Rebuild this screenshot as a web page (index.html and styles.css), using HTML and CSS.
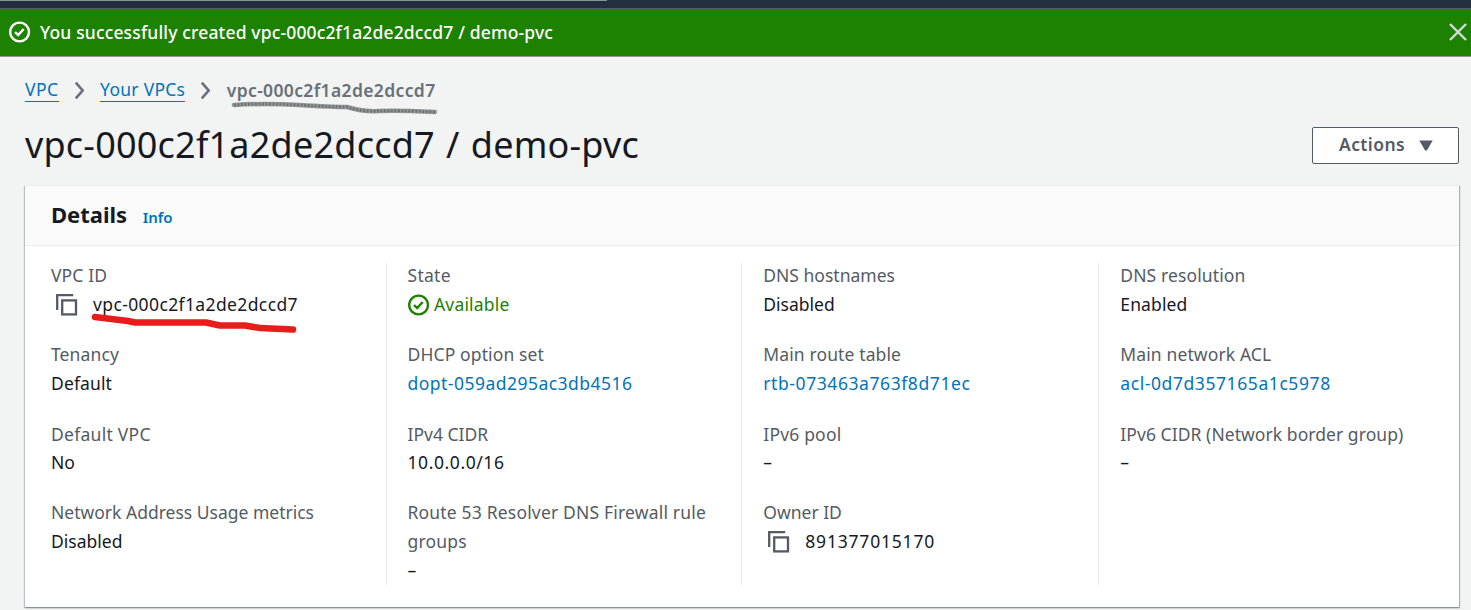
FILE: index.html
```html
<!DOCTYPE html>
<html lang="en">
<head>
<meta charset="utf-8">
<title>VPC details</title>
<link rel="stylesheet" href="styles.css">
</head>
<body>
<svg class="defs" aria-hidden="true">
  <symbol id="check" viewBox="0 0 22 22"><g fill="none" stroke="currentColor" stroke-width="2.4"><circle cx="10.6" cy="11" r="9.4"/><path d="M6 11.2l3.2 2.8 5.5-6"/></g></symbol>
  <symbol id="copy" viewBox="0 0 22 22"><g fill="none" stroke="currentColor" stroke-width="2.3"><path d="M1.2 16V1.2h16"/><rect x="6.2" y="6.4" width="13.8" height="14"/></g></symbol>
  <symbol id="chevron" viewBox="0 0 10 18"><path d="M1.5 1.5L8 9l-6.5 7.5" fill="none" stroke="currentColor" stroke-width="2.5"/></symbol>
</svg>
<div class="topbar"><div class="progress"></div></div>
<div class="flash">
  <svg class="icon"><use href="#check"/></svg>
  <span class="flash-text">You successfully created vpc-000c2f1a2de2dccd7 / demo-pvc</span>
  <svg class="close" viewBox="0 0 18 18"><path d="M1 1l16 16M17 1L1 17" fill="none" stroke="currentColor" stroke-width="2.4"/></svg>
</div>
<main class="page">
  <nav class="crumbs">
    <a class="crumb ls5">VPC</a>
    <svg class="chevron"><use href="#chevron"/></svg>
    <a class="crumb ls3">Your VPCs</a>
    <svg class="chevron"><use href="#chevron"/></svg>
    <span class="current">vpc-000c2f1a2de2dccd7
      <svg class="pencil" viewBox="0 0 208 14"><path d="M3 4Q35 2 68 4T116 6Q132 11 148 10T204 11"/><path class="grain" d="M3 4Q35 2 68 4T116 6Q132 11 148 10T204 11"/></svg>
    </span>
  </nav>
  <header class="heading">
    <h1>vpc-000c2f1a2de2dccd7 / demo-pvc</h1>
    <button class="actions"><span>Actions</span><svg viewBox="0 0 14 11"><path d="M.3.5h13.4L8.2 10q-1.2 1.2-2.4 0z" fill="currentColor"/></svg></button>
  </header>
  <section class="card">
    <div class="card-head"><h2>Details</h2><a class="info">Info</a></div>
    <div class="grid">
      <div class="col">
        <div class="field"><div class="label">VPC ID</div><div class="value copyrow"><svg class="icon copy"><use href="#copy"/></svg><span class="ls4 marked">vpc-000c2f1a2de2dccd7<svg class="marker" viewBox="0 0 208 20"><path d="M4 4l33 4 7 1.5h71l14 3h25l15 2.5 33 1.5"/></svg></span></div></div>
        <div class="field"><div class="label">Tenancy</div><div class="value ls1">Default</div></div>
        <div class="field"><div class="label ls3">Default VPC</div><div class="value up">No</div></div>
        <div class="field"><div class="label ls0">Network Address Usage metrics</div><div class="value ls0">Disabled</div></div>
      </div>
      <div class="col">
        <div class="field"><div class="label ls3">State</div><div class="value ok"><svg class="icon"><use href="#check"/></svg><span class="ls2">Available</span></div></div>
        <div class="field"><div class="label">DHCP option set</div><div class="value link ls5">dopt-059ad295ac3db4516</div></div>
        <div class="field"><div class="label ls0">IPv4 CIDR</div><div class="value up ls6">10.0.0.0/16</div></div>
        <div class="field"><div class="label ls2">Route 53 Resolver DNS Firewall rule<br>groups</div><div class="value">–</div></div>
      </div>
      <div class="col wide">
        <div class="field"><div class="label ls0">DNS hostnames</div><div class="value ls0">Disabled</div></div>
        <div class="field"><div class="label">Main route table</div><div class="value link ls6">rtb-073463a763f8d71ec</div></div>
        <div class="field"><div class="label ls2">IPv6 pool</div><div class="value up">–</div></div>
        <div class="field"><div class="label ls0">Owner ID</div><div class="value copyrow"><svg class="icon copy"><use href="#copy"/></svg><span class="ls8">891377015170</span></div></div>
      </div>
      <div class="col wide">
        <div class="field"><div class="label">DNS resolution</div><div class="value ls1">Enabled</div></div>
        <div class="field"><div class="label">Main network ACL</div><div class="value link ls6">acl-0d7d357165a1c5978</div></div>
        <div class="field"><div class="label lshalf">IPv6 CIDR (Network border group)</div><div class="value up">–</div></div>
      </div>
    </div>
  </section>
</main>
</body>
</html>
```
FILE: styles.css
```css
* { box-sizing: border-box; }
body { margin: 0; height: 610px; overflow: hidden; background: #f2f3f3; color: #16191f; font-family: "Noto Sans", "Open Sans", sans-serif; font-size: 17.5px; white-space: nowrap; }
.defs { position: absolute; width: 0; height: 0; }
.topbar { height: 9px; background: #232f3e; border-bottom: 1px solid #545b64; }
.progress { width: 607px; height: 1px; background: #879596; }
.flash { height: 48px; display: flex; align-items: center; padding: 0 4px 2px 9px; background: #1d8102; color: #fff; border-bottom: 1px solid #8c9895; }
.icon { width: 22px; height: 22px; flex: none; display: block; }
.flash-text { margin-left: 9px; font-size: 17.5px; font-weight: 500; letter-spacing: .15px; }
.close { width: 18px; height: 18px; margin-left: auto; color: #d5dbdb; }
.page { padding: 18px 12px 0 25px; }
.crumbs { height: 30px; display: flex; align-items: center; font-size: 17.5px; }
.crumb { color: #0073bb; border-bottom: 1px solid #0073bb; line-height: 23px; }
.chevron { width: 11px; height: 19px; margin: 0 15.5px 0 15px; color: #687078; }
.current { position: relative; color: #687078; font-weight: 600; letter-spacing: .36px; }
.pencil { position: absolute; left: 4px; top: 23px; width: 208px; height: 14px; fill: none; stroke: #969999; stroke-width: 4.5; stroke-linecap: round; }
.pencil .grain { stroke: #707373; stroke-width: 3; stroke-dasharray: 2 1.5; stroke-linecap: butt; }
.heading { height: 80px; display: flex; align-items: center; justify-content: space-between; }
h1 { margin: 0; font-size: 36px; font-weight: 400; line-height: 50px; letter-spacing: .22px; word-spacing: 1.6px; }
.actions { width: 147px; height: 37px; display: flex; align-items: center; justify-content: center; gap: 14px; padding: 0 0 2px 1px; background: #fff; border: 1px solid #545b64; border-radius: 2px; color: #545b64; font: 600 17.5px "Noto Sans", sans-serif; letter-spacing: .4px; }
.actions svg { width: 14px; height: 11px; position: relative; top: 1px; }
.card { height: 422px; background: #fff; border-top: 1px solid #eaeded; box-shadow: 0 1px 1px #879596, 1px 1px 1px #aab7b8, -1px 1px 1px #c5cdcd; }
.card-head { height: 60px; display: flex; align-items: baseline; padding: 12px 26px 0; background: #fafafa; border-bottom: 1px solid #eaeded; }
h2 { margin: 0; font-size: 22px; line-height: 32px; font-weight: 700; }
.info { margin-left: 15.5px; color: #0073bb; font-size: 15px; font-weight: 600; }
.grid { display: grid; grid-template-columns: 361px 355px 357px 361px; height: 324px; margin-top: 16px; }
.col { display: grid; grid-template-rows: 79px 80px 78px 87px; border-left: 1px solid #eaeded; padding-left: 20.5px; }
.col:first-child { border: 0; padding-left: 26px; }
.wide { padding-left: 21.3px; }
.field { margin-top: -1px; }
.label { color: #545b64; line-height: 29px; letter-spacing: .12px; }
.value { line-height: 29px; height: 29px; }
.up { margin-top: -1px; }
.link { color: #0073bb; }
.ok { display: flex; align-items: center; gap: 4.5px; color: #1d8102; }
.copyrow { display: flex; align-items: center; padding-left: 5px; gap: 15px; }
.copy { color: #545b64; }
.marked { position: relative; }
.marker { position: absolute; left: -2px; top: 23px; width: 208px; height: 20px; fill: none; stroke: #e91c1c; stroke-width: 6.5; stroke-linecap: round; stroke-linejoin: round; }
/* letter-spacing steps */
.ls0 { letter-spacing: 0; }
.lshalf { letter-spacing: .06px; }
.ls1 { letter-spacing: .12px; }
.ls2 { letter-spacing: .18px; }
.ls3 { letter-spacing: .27px; }
.ls4 { letter-spacing: .38px; }
.ls5 { letter-spacing: .48px; }
.ls6 { letter-spacing: .58px; }
.ls8 { letter-spacing: .8px; }
```
